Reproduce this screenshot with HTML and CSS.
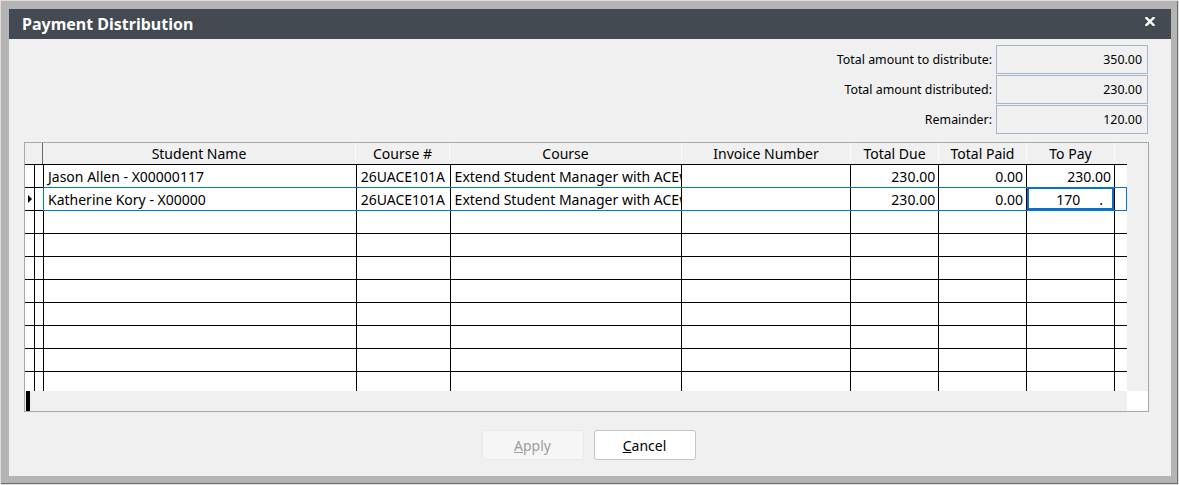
FILE: index.html
```html
<!DOCTYPE html>
<html>

<head>
    <title>Payment Distribution</title>
    <link rel="stylesheet" href="styles.css">
</head>

<body>
    <div class="screen">
        <div class="frame">
            <div class="window">
                <div class="titlebar">
                    <span class="title">Payment Distribution</span>
                    <svg class="close" width="10" height="9" viewBox="0 0 10 9">
                        <path d="M1.5 1 L8.5 8 M8.5 1 L1.5 8" stroke="#fff" stroke-width="2.4" stroke-linecap="square"/>
                    </svg>
                </div>

                <div class="content">
                    <div class="summary">
                        <div class="sum-row">
                            <span class="sum-label">Total amount to distribute:</span>
                            <span class="sum-box">350.00</span>
                        </div>
                        <div class="sum-row">
                            <span class="sum-label">Total amount distributed:</span>
                            <span class="sum-box">230.00</span>
                        </div>
                        <div class="sum-row">
                            <span class="sum-label">Remainder:</span>
                            <span class="sum-box">120.00</span>
                        </div>
                    </div>

                    <div class="grid">
                        <div class="rows">
                            <div class="row head">
                                <div class="cell ind-head"></div>
                                <div class="cell c-name">Student Name</div>
                                <div class="cell c-num">Course #</div>
                                <div class="cell c-course">Course</div>
                                <div class="cell c-inv">Invoice Number</div>
                                <div class="cell c-money">Total Due</div>
                                <div class="cell c-money">Total Paid</div>
                                <div class="cell c-money">To Pay</div>
                                <div class="cell c-trail"></div>
                            </div>
                            <div class="row">
                                <div class="cell ind"></div>
                                <div class="cell ind2"></div>
                                <div class="cell c-name">Jason Allen - X00000117</div>
                                <div class="cell c-num">26UACE101A</div>
                                <div class="cell c-course">Extend Student Manager with ACEware</div>
                                <div class="cell c-inv"></div>
                                <div class="cell c-money right">230.00</div>
                                <div class="cell c-money right">0.00</div>
                                <div class="cell c-money right">230.00</div>
                                <div class="cell c-trail"></div>
                            </div>
                            <div class="row selected">
                                <div class="cell ind"><span class="arrow"></span></div>
                                <div class="cell ind2"></div>
                                <div class="cell c-name">Katherine Kory - X00000</div>
                                <div class="cell c-num">26UACE101A</div>
                                <div class="cell c-course">Extend Student Manager with ACEware</div>
                                <div class="cell c-inv"></div>
                                <div class="cell c-money right">230.00</div>
                                <div class="cell c-money right">0.00</div>
                                <div class="cell c-money editing"><span>170</span><span class="dot">.</span></div>
                                <div class="cell c-trail"></div>
                            </div>
                            <div class="row"><div class="cell ind"></div><div class="cell ind2"></div><div class="cell c-name"></div><div class="cell c-num"></div><div class="cell c-course"></div><div class="cell c-inv"></div><div class="cell c-money"></div><div class="cell c-money"></div><div class="cell c-money"></div><div class="cell c-trail"></div></div>
                            <div class="row"><div class="cell ind"></div><div class="cell ind2"></div><div class="cell c-name"></div><div class="cell c-num"></div><div class="cell c-course"></div><div class="cell c-inv"></div><div class="cell c-money"></div><div class="cell c-money"></div><div class="cell c-money"></div><div class="cell c-trail"></div></div>
                            <div class="row"><div class="cell ind"></div><div class="cell ind2"></div><div class="cell c-name"></div><div class="cell c-num"></div><div class="cell c-course"></div><div class="cell c-inv"></div><div class="cell c-money"></div><div class="cell c-money"></div><div class="cell c-money"></div><div class="cell c-trail"></div></div>
                            <div class="row"><div class="cell ind"></div><div class="cell ind2"></div><div class="cell c-name"></div><div class="cell c-num"></div><div class="cell c-course"></div><div class="cell c-inv"></div><div class="cell c-money"></div><div class="cell c-money"></div><div class="cell c-money"></div><div class="cell c-trail"></div></div>
                            <div class="row"><div class="cell ind"></div><div class="cell ind2"></div><div class="cell c-name"></div><div class="cell c-num"></div><div class="cell c-course"></div><div class="cell c-inv"></div><div class="cell c-money"></div><div class="cell c-money"></div><div class="cell c-money"></div><div class="cell c-trail"></div></div>
                            <div class="row"><div class="cell ind"></div><div class="cell ind2"></div><div class="cell c-name"></div><div class="cell c-num"></div><div class="cell c-course"></div><div class="cell c-inv"></div><div class="cell c-money"></div><div class="cell c-money"></div><div class="cell c-money"></div><div class="cell c-trail"></div></div>
                            <div class="row"><div class="cell ind"></div><div class="cell ind2"></div><div class="cell c-name"></div><div class="cell c-num"></div><div class="cell c-course"></div><div class="cell c-inv"></div><div class="cell c-money"></div><div class="cell c-money"></div><div class="cell c-money"></div><div class="cell c-trail"></div></div>
                            <div class="row"><div class="cell ind"></div><div class="cell ind2"></div><div class="cell c-name"></div><div class="cell c-num"></div><div class="cell c-course"></div><div class="cell c-inv"></div><div class="cell c-money"></div><div class="cell c-money"></div><div class="cell c-money"></div><div class="cell c-trail"></div></div>
                            <div class="row"><div class="cell ind"></div><div class="cell ind2"></div><div class="cell c-name"></div><div class="cell c-num"></div><div class="cell c-course"></div><div class="cell c-inv"></div><div class="cell c-money"></div><div class="cell c-money"></div><div class="cell c-money"></div><div class="cell c-trail"></div></div>
                        </div>
                        <div class="side"></div>
                        <div class="strip"><span class="caret"></span></div>
                        <div class="corner"></div>
                    </div>

                    <div class="buttons">
                        <button class="btn" disabled><u>A</u>pply</button>
                        <button class="btn"><u>C</u>ancel</button>
                    </div>
                </div>
            </div>
        </div>
    </div>
</body>

</html>
```

FILE: styles.css
```css
* {
    box-sizing: border-box;
}

body {
    margin: 0;
    font-family: 'Noto Sans', 'Open Sans', sans-serif;
    font-size: 14px;
    color: #000;
}

.screen {
    width: 1179px;
    height: 485px;
    border: 1px solid #dedede;
}

.frame {
    height: 100%;
    padding: 8px 6px 7px 8px;
    background: #b4b4b4;
    border-right: 1px solid #6e6e6e;
    border-bottom: 1px solid #6e6e6e;
}

.window {
    display: flex;
    flex-direction: column;
    height: 467px;
    background: #f0f0f0;
}

.titlebar {
    display: flex;
    justify-content: space-between;
    align-items: center;
    height: 30px;
    padding: 0 16px 0 13px;
    background: #434a52;
    color: #fff;
}

.title {
    font-weight: 700;
    font-size: 16px;
}

.close {
    align-self: flex-start;
    margin-top: 8px;
}

.content {
    flex: 1;
    padding: 6px 22px 0 15px;
}

.summary {
    display: flex;
    flex-direction: column;
    align-items: flex-end;
    gap: 1px;
    margin-right: 1px;
    font-size: 12.4px;
}

.sum-row {
    display: flex;
    align-items: center;
    gap: 4px;
}

.sum-box {
    width: 152px;
    height: 29px;
    padding-right: 5px;
    border: 1px solid #a3b6cc;
    display: flex;
    align-items: center;
    justify-content: flex-end;
}

/* grid */

.grid {
    display: grid;
    grid-template-columns: 1102px 21px;
    grid-template-rows: 248px 20px;
    margin-top: 8px;
    border: 1px solid #a8a8a8;
    background: #f0f0f0;
}

.rows {
    overflow: hidden;
    background: #fff;
}

.row {
    display: flex;
    height: 23px;
    border-bottom: 1px solid #000;
}

.row.head {
    height: 22px;
    background: #f0f0f0;
}

.cell {
    display: flex;
    align-items: center;
    padding: 0 4px;
    white-space: nowrap;
    overflow: hidden;
    border-right: 1px solid #000;
}

.head .cell {
    justify-content: center;
    border-right-color: #fbfbfb;
}

.head .ind-head {
    width: 18px;
    border-right-color: #6a6a6a;
}

.ind {
    width: 10px;
    padding: 0;
    justify-content: center;
}

.ind2 {
    width: 8px;
}

.c-name { width: 313px; }
.c-num { width: 94px; }
.c-course { width: 232px; }
.c-inv { width: 169px; }
.c-money { width: 88px; }

.cell.c-trail {
    width: 12px;
    border-right: none;
}

.right {
    justify-content: flex-end;
    padding-right: 3px;
}

.arrow {
    width: 0;
    height: 0;
    margin-left: 1px;
    border-left: 4px solid #000;
    border-top: 4px solid transparent;
    border-bottom: 4px solid transparent;
}

.selected {
    position: relative;
}

.selected::after {
    content: '';
    position: absolute;
    top: -1px;
    left: 18px;
    right: 0;
    bottom: -1px;
    border: 1px solid #0078d7;
}

.editing {
    position: relative;
    justify-content: flex-end;
    padding-right: 11px;
}

.editing::after {
    content: '';
    position: absolute;
    top: -1px;
    left: 0;
    right: 0;
    bottom: 0;
    border: 2px solid #0a6ccb;
}

.dot {
    margin-left: 19px;
}

.side {
    background: #f0f0f0;
}

.strip {
    padding-left: 1px;
}

.caret {
    display: block;
    width: 4px;
    height: 20px;
    background: #000;
}

.corner {
    background: #fff;
}

/* buttons */

.buttons {
    display: flex;
    justify-content: center;
    gap: 10px;
    margin-top: 18px;
    padding-left: 4px;
}

.btn {
    width: 102px;
    height: 30px;
    font-family: inherit;
    font-size: 14px;
    color: #000;
    background: #fff;
    border: 1px solid #c4c4c4;
    border-radius: 3px;
}

.btn:disabled {
    color: #9d9d9d;
    background: #f6f6f6;
    border-color: #e9e9e9;
}
```
